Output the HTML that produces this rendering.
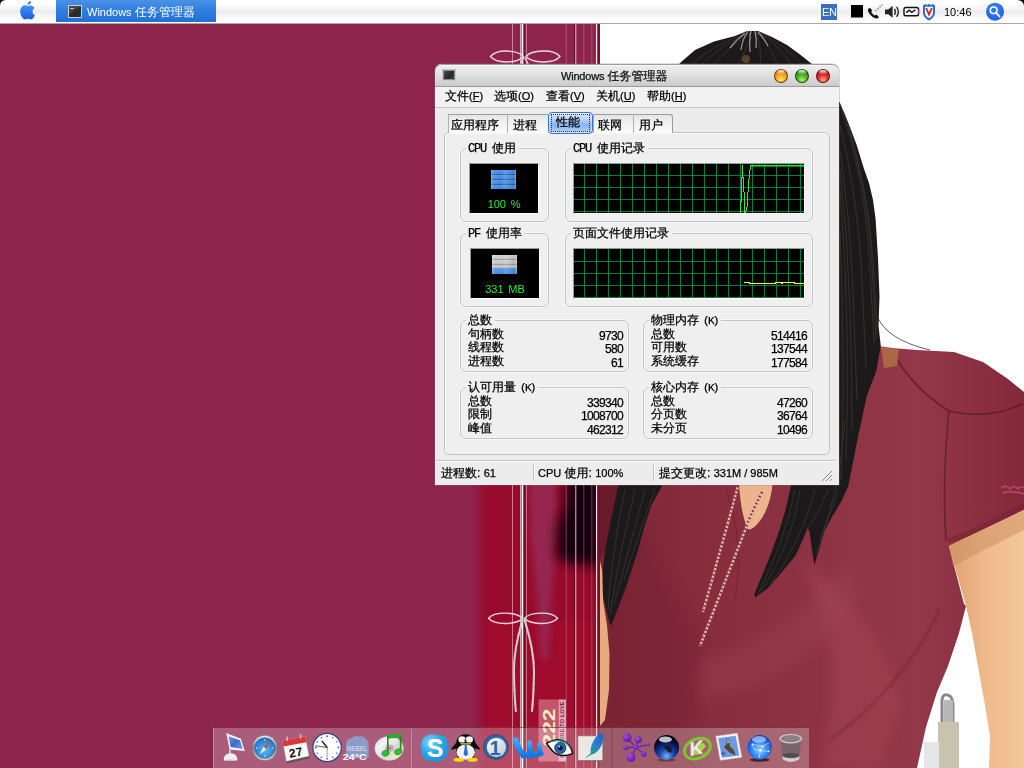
<!DOCTYPE html>
<html lang="zh-CN">
<head>
<meta charset="utf-8">
<title>Windows 任务管理器</title>
<style>
html,body{margin:0;padding:0;}
body{width:1024px;height:768px;overflow:hidden;position:relative;background:#8d244c;font-family:"Liberation Sans","WenQuanYi Zen Hei","Noto Sans CJK SC",sans-serif;font-size:12px;color:#000;}
#bg{position:absolute;left:0;top:0;width:1024px;height:768px;}
#menubar{will-change:transform;position:absolute;left:0;top:0;width:1024px;height:23px;background:linear-gradient(#ffffff 0,#fdfdfd 20%,#ececec 50%,#f4f4f4 65%,#ffffff 90%);border-bottom:1px solid #a9a9a9;font-size:12px;line-height:12px;}
#menubar .mbsvg{position:absolute;left:0;top:0;}
#menubar .lat{font-family:"Liberation Sans",sans-serif;font-size:11px;}
#menubar .tk{position:absolute;left:87px;top:6px;color:#fff;white-space:nowrap;}
#menubar .en{position:absolute;left:822px;top:6px;color:#fff;font-family:"Liberation Sans",sans-serif;font-size:11px;letter-spacing:-.3px;}
#menubar .clk{position:absolute;left:944px;top:6px;color:#000;font-family:"Liberation Sans",sans-serif;font-size:11px;}
/*WINCSS*/
#win{will-change:transform;position:absolute;left:435px;top:64px;width:403.5px;height:421px;background:#ececec;border-radius:7px 7px 0 0;box-shadow:0 0 0 .6px rgba(120,120,120,.5);font-size:12px;line-height:12px;color:#000;-webkit-text-stroke:.25px #000;}
#win .lat{font-family:"Liberation Sans",sans-serif;font-size:11px;}
#win .n{font-family:"Liberation Sans",sans-serif;font-size:12px;letter-spacing:-.67px;}
#win .mt .n{font-size:11px;letter-spacing:-.1px;}
#win .m{font-family:"Liberation Mono",monospace;letter-spacing:-1.2px;}
#win .k{letter-spacing:-1.7px;margin-left:4px;font-size:11px;}
.tbar{position:absolute;left:0;top:0;width:100%;height:22px;border-radius:7px 7px 0 0;background:linear-gradient(#efefef 0,#e6e6e6 35%,#d8d8d8 70%,#cbcbcb 100%);border-bottom:1px solid #9a9a9a;box-sizing:content-box;box-shadow:inset 0 1px 0 #9c9c9c, inset 0 2px 0 #f8f8f8;}
.ticon{position:absolute;left:7px;top:5px;width:12px;height:10px;border:1px solid #c8c8c8;outline:1px solid #8a8a8a;outline-offset:-2px;background:linear-gradient(135deg,#555 0,#2a2a2a 50%,#3c3c3c 100%);}
.ttext{position:absolute;left:126px;top:6px;white-space:nowrap;color:#1a1a1a;}
.ttext .lat{letter-spacing:-.2px;}
.tb{position:absolute;top:5px;width:14px;height:14px;border-radius:50%;box-sizing:border-box;border:1px solid rgba(60,30,0,.75);}
.tb.o{left:339px;background:radial-gradient(circle at 50% 85%,#ffe860 0,#f8a81c 45%,#e07808 80%);}
.tb.g{left:360px;background:radial-gradient(circle at 50% 85%,#b8f070 0,#4cb020 45%,#2a8410 80%);border-color:rgba(10,50,0,.75);}
.tb.r{left:381px;background:radial-gradient(circle at 50% 85%,#ffa090 0,#e03030 45%,#b01818 80%);border-color:rgba(70,0,0,.75);}
.tb:after{content:"";position:absolute;left:2px;top:0px;width:8px;height:4px;border-radius:50%;background:linear-gradient(rgba(255,255,255,.9),rgba(255,255,255,.1));}
.mbar{position:absolute;left:0;top:23px;width:100%;height:20px;background:#f2f2f2;border-bottom:1px solid #c6c6c6;}
.mbar>span{position:absolute;top:3px;white-space:nowrap;}
.mbar u{font-family:"Liberation Sans",sans-serif;font-size:11px;}
.panel{position:absolute;left:9px;top:68px;width:386px;height:323px;box-sizing:border-box;border:1px solid #c2c2c2;border-radius:5px;background:#efefef;box-shadow:inset 1px 1px 0 #fafafa;}
.tab{position:absolute;top:50px;height:19px;box-sizing:border-box;border:1px solid #9c9c9c;border-bottom:none;border-left-color:#b0b0b0;background:linear-gradient(#e6e6e6 0,#f2f2f2 50%,#fcfcfc 100%);text-align:left;padding:4px 0 0 3px;white-space:nowrap;}
.tab{border-right:none;}
.tab.last{border-right:1px solid #9c9c9c;border-radius:0 3px 0 0;}
.tab:first-of-type{border-radius:3px 0 0 0;}
.tab.sel{top:48px;height:22px;border:1px solid #346edb;border-radius:4px;background:linear-gradient(#dfeafc 0,#b3cef6 35%,#8ab4ef 60%,#a4c6f5 85%,#c4dafa 100%);padding:0;box-shadow:inset 0 0 0 1px rgba(255,255,255,.5);}
.tab.sel i{font-style:normal;display:block;margin:1px 2px 0 2px;height:16px;border:1px dotted #333;line-height:15px;padding-left:4px;}
.grp{position:absolute;box-sizing:border-box;border:1px solid #c4c4c4;border-radius:6px;box-shadow:0 0 0 1px rgba(255,255,255,.55), inset 0 0 0 1px rgba(255,255,255,.35);}
.grp b{position:absolute;left:5px;top:-7px;padding:0 3px 0 2px;background:#efefef;font-weight:normal;white-space:nowrap;line-height:12px;}
.meter{position:absolute;width:70px;height:51px;box-sizing:border-box;border:1px solid #9a9a9a;border-right-color:#fff;border-bottom-color:#fff;background:#000;}
.bars{position:absolute;left:21px;top:6px;width:25px;height:19px;}
.bars.blue{background:linear-gradient(90deg,rgba(255,255,255,.28) 0,rgba(255,255,255,.05) 12%,rgba(255,255,255,0) 40%,rgba(255,255,255,.12) 55%,rgba(0,0,40,.08) 90%,rgba(255,255,255,.2) 100%),repeating-linear-gradient(#4f96e6 0,#4389df 3.500px,#2b5fae 4px,#2b5fae 5px);}
.bars.grey{background:linear-gradient(90deg,rgba(255,255,255,.28) 0,rgba(255,255,255,.05) 12%,rgba(255,255,255,0) 40%,rgba(255,255,255,.12) 55%,rgba(0,0,0,.08) 90%,rgba(255,255,255,.2) 100%),linear-gradient(#d6d6d6 0,#c2c2c2 4px,#9a9a9a 4px,#9a9a9a 5px,#d0d0d0 5px,#bebebe 9px,#969696 9px,#969696 10px,#cacaca 10px,#bababa 13px,#7a9cd0 13px,#4f96e6 14px,#4f96e6 15px,#4389df 19px);}
.mt{-webkit-text-stroke:0;position:absolute;left:0;top:34px;width:68px;text-align:center;color:#22f028;white-space:pre;word-spacing:2px;}
.graph{position:absolute;width:232px;height:51px;box-sizing:border-box;border:1px solid #9a9a9a;border-right-color:#fff;border-bottom-color:#fff;background:#000;}
.graph svg{display:block;}
.rows{position:absolute;}
.rows p{margin:0;height:13px;line-height:13px;white-space:nowrap;position:relative;}
.rows p:nth-child(2){height:14px;}
.rows p span{position:absolute;right:0;top:2px;}
.sbar{position:absolute;left:0;top:396px;width:400px;height:25px;border-top:1px solid #c4c4c4;box-shadow:inset 0 1px 0 #fafafa;}
.sbar>span{position:absolute;top:6px;white-space:nowrap;}
.sbar>i{position:absolute;top:4px;width:1px;height:16px;background:#c0c0c0;border-right:1px solid #fafafa;}
.sbar .grip{position:absolute;left:386px;top:9px;}
/*ENDWINCSS*/
#dock{position:absolute;left:213px;top:727px;width:596px;height:41px;background:rgba(255,255,255,.26);box-sizing:border-box;border-top:1px solid rgba(90,10,40,.55);border-left:1px solid rgba(255,255,255,.25);}
#dock svg{position:absolute;left:0;top:0;}
</style>
</head>
<body>
<svg id="bg" viewBox="0 0 1024 768" width="1024" height="768">
<!--BGSTART-->
<defs>
<linearGradient id="ghostfade" x1="0" x2="1" y1="0" y2="0">
<stop offset="0" stop-color="#980a2c" stop-opacity="0"/>
<stop offset="1" stop-color="#980a2c" stop-opacity="1"/>
</linearGradient>
<linearGradient id="shirtg" x1="0" x2="1" y1="0" y2="0">
<stop offset="0" stop-color="#7e2636"/>
<stop offset="0.35" stop-color="#8a2f40"/>
<stop offset="0.75" stop-color="#933848"/>
<stop offset="1" stop-color="#84293a"/>
</linearGradient>
<linearGradient id="arm" x1="0" x2="1" y1="0" y2="0">
<stop offset="0" stop-color="#e0a070"/>
<stop offset="0.5" stop-color="#f0bb8c"/>
<stop offset="1" stop-color="#f4c69a"/>
</linearGradient>
<filter id="blur6" x="-30%" y="-30%" width="160%" height="160%"><feGaussianBlur stdDeviation="6"/></filter>
<filter id="blur3" x="-30%" y="-30%" width="160%" height="160%"><feGaussianBlur stdDeviation="3"/></filter>
<filter id="blur1" x="-30%" y="-30%" width="160%" height="160%"><feGaussianBlur stdDeviation="1"/></filter>
</defs>
<rect x="0" y="0" width="1024" height="768" fill="#8d244c"/>
<!-- ghost silhouette -->
<g>
<rect x="471" y="470" width="17" height="300" fill="url(#ghostfade)"/>
<rect x="488" y="470" width="112" height="300" fill="#980a2c"/>
<rect x="488" y="620" width="112" height="150" fill="#a40c2c" opacity=".5"/>
<path d="M528 470 L556 470 L556 540 L551 610 L548 660 L541 660 L538 610 L531 540 Z" fill="#96264f" filter="url(#blur3)"/>
<path d="M566 470 L600 470 L600 572 L586 563 L570 565 L556 556 L558 525 L565 505 Z" fill="#16000a" filter="url(#blur6)"/>
</g>
<!-- vertical lines -->
<g>
<rect x="512" y="23" width="1" height="745" fill="#f0c4d2" opacity=".6"/>
<rect x="520" y="23" width="1" height="745" fill="#f3d0da" opacity=".75"/>
<rect x="521.6" y="23" width="1.6" height="745" fill="#ffffff"/>
<rect x="524" y="23" width="1" height="745" fill="#4a0a20" opacity=".55"/>
<rect x="526" y="23" width="1" height="745" fill="#e8a8bc" opacity=".6"/>
<rect x="565.5" y="23" width="1.6" height="745" fill="#c87890" opacity=".35"/>
<rect x="574" y="23" width="1" height="745" fill="#3a0818" opacity=".6"/>
<rect x="575.3" y="23" width="1" height="745" fill="#f6dce4" opacity=".85"/>
<rect x="583.3" y="23" width="1" height="745" fill="#d890a8" opacity=".4"/>
<rect x="591.3" y="23" width="1" height="745" fill="#d890a8" opacity=".4"/>
<rect x="596" y="23" width="1.3" height="745" fill="#ffffff" opacity=".92"/>
<rect x="597.6" y="23" width="2.4" height="745" fill="#7c0c28"/>
</g>
<!-- bows -->
<g fill="none" stroke="#f2d4de" stroke-width="1.4">
<path d="M523.5 56.5C518 50 497 48.500 490.500 56.500C497 64.500 518 63 523.500 56.500Z"/>
<path d="M526 56.500C531.500 50 553.500 48.500 560 56.500C553.500 64.500 531.500 63 526 56.500Z"/>
<path d="M522.500 618.300C517 612 495 610.800 488.500 618.300C495 625.800 517 624.600 522.500 618.300Z"/>
<path d="M524.500 618.300C530 612 551 610.800 557.600 618.300C551 625.800 530 624.600 524.500 618.300Z"/>
</g>
<g fill="none" stroke-width="2" stroke-linecap="round">
<path d="M522.600 620Q513.500 650 514 672Q514.300 695 515.800 711" stroke="#ecc4dc"/>
<path d="M524.600 620Q534 650 534 672Q533.600 695 532 711" stroke="#ecc4dc"/>
<path d="M522.600 620Q513.500 650 514 672Q514.300 695 515.800 711" stroke="#a8d8b0" stroke-dasharray="2 5" opacity=".8"/>
<path d="M524.600 620Q534 650 534 672Q533.600 695 532 711" stroke="#a8d8b0" stroke-dasharray="2 5" opacity=".8"/>
<path d="M523.500 58Q521 62 520 66M525 58Q527.500 62 528.500 66" stroke="#e4c0e0" stroke-width="1.6"/>
</g>
<!-- 222 box -->
<rect x="538.500" y="699.500" width="20" height="62" fill="#c4566c"/>
<rect x="558.500" y="699.500" width="7.500" height="62" fill="#dba6b6"/>
<text transform="translate(555.300 746.500) rotate(-90)" font-family="Liberation Sans, sans-serif" font-weight="bold" font-size="16.500" fill="#f8ecc0" textLength="38" lengthAdjust="spacingAndGlyphs">222</text>
<text transform="translate(564.400 758) rotate(-90)" font-family="Liberation Sans, sans-serif" font-weight="bold" font-size="5.500" fill="#8a1c38" letter-spacing=".2">SOMEONE TO LOVE</text>
<!-- photo white -->
<rect x="600" y="23" width="424" height="745" fill="#ffffff"/>
<!-- woman: shirt -->
<path d="M600 430 L840 430 L878 346 L892 348 L917 350 L954 352 L983 362 L1008 379 L1024 392 L1024 510 L949 546 L964 604 L966 606 L959 633 L948 666 L937 692 L926 727 L917 768 L600 768 Z" fill="url(#shirtg)"/>
<!-- shirt shading -->
<path d="M600 560 L640 520 L700 640 L690 768 L600 768 Z" fill="#6e1e2e" opacity=".3" filter="url(#blur6)"/>
<path d="M800 560 Q870 600 900 700 L880 768 L820 768 Q850 650 800 560Z" fill="#a84c5c" opacity=".4" filter="url(#blur6)"/>
<path d="M700 660 Q780 640 850 560 L860 600 Q790 690 700 700Z" fill="#a04656" opacity=".3" filter="url(#blur6)"/>
<path d="M940 610 Q900 690 830 740" stroke="#6c1c2c" stroke-width="3" fill="none" opacity=".35" filter="url(#blur1)"/>
<path d="M949 411 Q942 480 946 540" stroke="#5a1826" stroke-width="1.600" fill="none" opacity=".7"/>
<path d="M895 356 Q915 390 949 411 Q990 420 1022 404" stroke="#4a1420" stroke-width="1.600" fill="none" opacity=".6"/>
<path d="M948 541 Q985 528 1024 505" stroke="#74202f" stroke-width="5" fill="none" opacity=".5"/>
<path d="M726 490 Q745 540 735 600" stroke="#6a1c2c" stroke-width="1.500" fill="none" opacity=".45"/>
<path d="M1001 488 Q1006 484 1010 489 Q1014 484 1018 489 Q1021 485 1024 488 M1002 493 Q1012 490 1024 494" stroke="#c24a72" stroke-width="1.600" fill="none" opacity=".9"/>
<path d="M600 486 L618 486 L611 520 L604 552 L600 560 Z" fill="#641828" opacity=".8"/>
<!-- arm -->
<path d="M949 546 L1024 510 L1024 768 L989 768 L990 736 L985 705 L979 672 L972 633 L966 606 Z" fill="url(#arm)"/>
<path d="M949 546 L1024 510 L1024 530 L953 566 Z" fill="#c88858" opacity=".45"/>
<!-- left skin sliver -->
<path d="M600 561 L602.500 572 L603 600 L607 625 L609.500 654 L609 690 L605 720 L600 726 Z" fill="#e6ac80"/>
<!-- neck opening -->
<path d="M739 484 L772.500 484 Q771 503 762 518 Q754 530 748 529.500 Q741 515 739 484 Z" fill="#ecb48c"/>
<!-- shoulder skin hint -->
<path d="M881 347 L899 349.500 L897 366 L884 368 Z" fill="#b07048" opacity=".85"/>
<!-- necklace cords -->
<g fill="none" stroke-linecap="butt">
<path d="M738 486 Q722 545 703 612" stroke="#dcb8ac" stroke-width="2.400"/>
<path d="M738 486 Q722 545 703 612" stroke="#7c2434" stroke-width="2.400" stroke-dasharray="1.500 2.500"/>
<path d="M762 492 Q748 520 746 528 Q722 590 700 646" stroke="#dcb8ac" stroke-width="2.400"/>
<path d="M762 492 Q748 520 746 528 Q722 590 700 646" stroke="#7c2434" stroke-width="2.400" stroke-dasharray="1.500 2.500"/>
</g>
<!-- hair -->
<path d="M640 200 L672 75 L680 63 L695 50 L714 41.500 L735 36 L747 31 L758 31 L772 37 L787 45 L800 54.500 L812 64 L830 88 L840 103 L848 122 L857 146 L864 169 L869 183 L873 200 L875.600 219 L878 258 L879.500 297 L878.500 326 L880.800 346 L876 372 L867 395 L858 437 L848.300 486 L841.600 501 L831.400 518 L824.600 531 L819.600 548 L814.500 565 L812 550 L809.400 531 L807.700 528 L796 555 L782 572 L767 589 L755 597.400 L754.400 594 L762 575.400 L770.500 555 L779 531.400 L785.700 509.400 L791 486 L791 300 Z" fill="#1b1919"/>
<path d="M625 300 L666 300 L662 486 L651 506 L644 528 L638 550 L631 572 L625 590 L618 608 L611 626 L609 621 L603 595 L602.600 572 L605 550 L611.500 517 L618 486 Z" fill="#1b1919"/>
<path d="M878 318 Q888 340 930 350" stroke="#2a2626" stroke-width=".9" fill="none" opacity=".8"/>
<!-- hair strands -->
<g fill="none" stroke="#5a5250" stroke-width=".9" opacity=".45">
<path d="M750 33 Q715 42 690 66"/><path d="M752 33 Q730 45 712 66"/><path d="M754 33 Q745 48 738 66"/><path d="M757 33 Q770 45 778 66"/><path d="M759 33 Q785 44 803 66"/><path d="M756 32 Q762 48 760 66"/><path d="M748 34 Q722 44 700 66"/><path d="M760 34 Q778 44 792 66"/>
<path d="M841 108 Q862 170 868 240 Q872 300 874 345"/><path d="M840 125 Q856 190 861 260 Q864 320 866 370"/><path d="M840 150 Q850 220 853 290 Q855 350 857 400"/><path d="M840 190 Q846 260 847 330 Q848 400 846 460"/><path d="M848 125 Q868 190 873 260 Q876 300 877 335"/><path d="M844 112 Q866 180 871 250 Q874 300 876 340"/><path d="M840 170 Q848 240 850 310 Q852 370 852 430"/><path d="M840 230 Q843 300 843 370 Q843 430 841 480"/>
<path d="M845 420 Q840 490 820 540"/><path d="M838 490 Q826 525 816 555"/><path d="M800 490 Q792 545 762 590"/><path d="M815 490 Q800 545 770 585"/><path d="M828 490 Q815 520 806 530"/><path d="M795 490 Q785 540 758 594"/>
<path d="M625 490 Q612 550 608 610"/><path d="M635 490 Q620 550 610 615"/><path d="M645 490 Q630 545 614 605"/><path d="M655 490 Q640 530 624 580"/>
</g>
<g fill="none" stroke="#e0e0e0" stroke-width="1.300" opacity=".6">
<path d="M748 31 Q742 40 741 50"/><path d="M751 30 Q749 40 750 52"/><path d="M755 31 Q757 40 756 48"/><path d="M745 33 Q736 40 730 48"/><path d="M758 32 Q764 38 768 46"/>
</g>
<ellipse cx="746" cy="59" rx="4" ry="4" fill="#7a5030" opacity=".7"/>
<!-- chair -->
<g>
<path d="M942 768 L942 700 Q943 692 950 696 Q953 699 953 706 L953 768" fill="none" stroke="#8a8a8a" stroke-width="3"/>
<rect x="944" y="700" width="9" height="68" fill="#b8b8b8"/>
<rect x="938" y="722" width="21" height="46" fill="#c9c2ae"/>
<rect x="924" y="742" width="15" height="26" fill="#e6e6e6"/>
</g>
<!--BGEND-->
</svg>
<!--MB-->
<div id="menubar">
 <svg class="mbsvg" width="1024" height="24" viewBox="0 0 1024 24">
  <defs>
   <linearGradient id="appleg" x1="0" y1="0" x2="0" y2="1"><stop offset="0" stop-color="#3f92f4"/><stop offset="1" stop-color="#1c5ee0"/></linearGradient>
   <linearGradient id="btng" x1="0" y1="0" x2="0" y2="1"><stop offset="0" stop-color="#4a92e6"/><stop offset=".5" stop-color="#2f7ddf"/><stop offset="1" stop-color="#2270d6"/></linearGradient>
   <radialGradient id="spotg" cx=".45" cy=".35" r=".7"><stop offset="0" stop-color="#3f8cf6"/><stop offset="1" stop-color="#1a5ae0"/></radialGradient>
  </defs>
  <path d="M0 0H6Q0 0 0 6Z" fill="#000"/>
  <path d="M1024 0H1017Q1024 0 1024 7Z" fill="#000"/>
  <!-- apple -->
  <path d="M28 6.3C26.6 5.2 24.8 4.9 23.4 5.6C21 6.8 19.9 9.6 20.2 12.2C20.5 15 22 17.8 23.6 18.9C24.8 19.7 26 19.4 27 18.9C27.7 18.6 28.4 18.6 29.1 18.9C30.2 19.4 31.4 19.7 32.5 18.8C33.6 17.9 34.5 16.5 34.9 15.1C33.3 14.4 32.5 13.1 32.6 11.5C32.7 10 33.4 8.8 34.4 8C33.4 6.3 31.6 5.2 29.8 5.6C29.1 5.8 28.5 6.1 28 6.3Z" fill="url(#appleg)"/>
  <path d="M27.3 4.8C27.2 3.2 28.6 1.3 31 0.9C31.2 2.9 29.6 4.7 27.3 4.8Z" fill="#2f78ec"/>
  <!-- task button -->
  <rect x="56" y="0" width="160" height="22" fill="url(#btng)"/>
  <rect x="68" y="5" width="14" height="13" fill="#cfcfcf"/>
  <rect x="69" y="6" width="12" height="11" fill="#2b2b2b"/>
  <path d="M69 6H81L69 14Z" fill="#555" opacity=".7"/>
  <rect x="70.5" y="8" width="3" height="1" fill="#ddd"/>
  <!-- EN -->
  <rect x="821" y="4" width="16" height="16" fill="#3c6cbe"/>
  <!-- black square -->
  <rect x="851" y="5" width="12" height="12.5" fill="#000"/>
  <!-- phone -->
  <path d="M868.6 8.6C867.6 9.6 867.8 11.2 868.9 12.9C870.3 15 872.6 17.2 874.6 18.1C876.4 18.9 877.8 18.4 878.9 16.9L876.4 14.6L874.9 15.6C873.6 14.9 872 13.3 871.2 11.9L872.3 10.6L870.1 8Z" fill="#111"/>
  <g stroke="#9a9a9a" stroke-width="1.6" stroke-linecap="butt"><path d="M875.3 11.2L876.3 9.9M877.5 9.4L878.5 8.1M879.6 7.4L880.6 6.1M881.6 5.6L882.4 4.6"/></g>
  <!-- speaker -->
  <path d="M885 9.4H888.3L892.6 5.7V17.8L888.3 14.2H885Z" fill="#222"/>
  <path d="M894.4 8.8Q896.4 11.7 894.4 14.8M896.6 6.8Q900 11.7 896.6 16.8" stroke="#222" stroke-width="1.4" fill="none"/>
  <!-- battery -->
  <rect x="904" y="7.5" width="14.5" height="8.2" rx="1.8" fill="#fff" stroke="#111" stroke-width="1.4"/>
  <path d="M906.3 12.6L909.4 10.2L911.8 12.4L915.4 9.8" stroke="#111" stroke-width="1.4" fill="none"/>
  <path d="M918.8 9.5V14" stroke="#d040c0" stroke-width="1"/>
  <!-- shield -->
  <path d="M923 5.4L925.2 3.9L927 5L929 3.8L931 5L932.8 3.9L935 5.4V12.4C935 16.2 932.2 18.9 929 20.4C925.8 18.9 923 16.2 923 12.4Z" fill="#2f6fd0"/>
  <path d="M925 6.8H933V12.4C933 14.9 931.3 16.9 929 18.1C926.7 16.9 925 14.9 925 12.4Z" fill="#fff"/>
  <path d="M926.2 8L929 14.6L931.8 8" stroke="#d82828" stroke-width="1.9" fill="none"/>
  <!-- spotlight -->
  <circle cx="995" cy="11.7" r="9" fill="url(#spotg)"/>
  <circle cx="993.6" cy="10.3" r="3.3" fill="#2f74ec" stroke="#fff" stroke-width="1.6"/>
  <path d="M996.2 12.9L999.6 16.6" stroke="#fff" stroke-width="1.9" stroke-linecap="round"/>
 </svg>
 <span class="tk"><span class="lat">Windows</span> 任务管理器</span>
 <span class="en">EN</span>
 <span class="clk">10:46</span>
</div>
<!--ENDMB-->
<!--WIN-->
<div id="win">
 <div class="tbar">
  <div class="ticon"></div>
  <div class="ttext"><span class="lat">Windows</span> 任务管理器</div>
  <div class="tb o"></div><div class="tb g"></div><div class="tb r"></div>
 </div>
 <div class="mbar">
  <span style="left:10px">文件<span class="lat">(<u>F</u>)</span></span>
  <span style="left:59px">选项<span class="lat">(<u>O</u>)</span></span>
  <span style="left:111px">查看<span class="lat">(<u>V</u>)</span></span>
  <span style="left:161px">关机<span class="lat">(<u>U</u>)</span></span>
  <span style="left:212px">帮助<span class="lat">(<u>H</u>)</span></span>
 </div>
 <div class="panel"></div>
 <div class="tab" style="left:13px;width:59px;padding-left:2px">应用程序</div>
 <div class="tab" style="left:72px;width:41px;padding-left:5px">进程</div>
 <div class="tab" style="left:158px;width:40px;padding-left:4px">联网</div>
 <div class="tab last" style="left:198px;width:40px;padding-left:5px">用户</div>
 <div class="tab sel" style="left:113px;width:45px"><i>性能</i></div>

 <div class="grp" style="left:25px;top:84px;width:89px;height:74px"><b><span class="m">CPU </span>使用</b></div>
 <div class="grp" style="left:130px;top:84px;width:248px;height:74px"><b><span class="m">CPU </span>使用记录</b></div>
 <div class="grp" style="left:25px;top:169px;width:89px;height:74px"><b><span class="m">PF </span>使用率</b></div>
 <div class="grp" style="left:130px;top:169px;width:248px;height:74px"><b>页面文件使用记录</b></div>

 <div class="meter" style="left:34px;top:99px">
   <div class="bars blue"></div>
   <div class="mt"><span class="n">100 %</span></div>
 </div>
 <div class="meter" style="left:35px;top:184px">
   <div class="bars grey"></div>
   <div class="mt"><span class="n">331 MB</span></div>
 </div>
 <div class="graph" style="left:138px;top:99px">
  <svg width="230" height="49" viewBox="0 0 230 49">
   <rect width="231" height="50" fill="#000"/>
   <g stroke="#008040" stroke-width="1" shape-rendering="crispEdges">
    <path d="M10.5 0V50M22.5 0V50M34.5 0V50M46.5 0V50M58.5 0V50M70.5 0V50M82.5 0V50M94.5 0V50M106.5 0V50M118.5 0V50M130.5 0V50M142.5 0V50M154.5 0V50M166.5 0V50M178.5 0V50M190.5 0V50M202.5 0V50M214.5 0V50M226.5 0V50"/>
    <path d="M0 11.5H231M0 23.5H231M0 35.5H231M0 47.5H231"/>
   </g>
   <path d="M168.4 1V13L167.4 14V37L166.5 38V49" stroke="#3fe43f" stroke-width="1" fill="none" shape-rendering="crispEdges"/>
   <path d="M169.4 13L170.9 48.5L171.8 48L173.4 41L174.2 24.600L175.5 9L176.7 1.600" stroke="#3fe43f" stroke-width="1" fill="none" shape-rendering="crispEdges"/><path d="M176.2 1.700H230" stroke="#00ff00" stroke-width="1.400" fill="none"/>
  </svg>
 </div>
 <div class="graph" style="left:138px;top:184px">
  <svg width="230" height="49" viewBox="0 0 230 49">
   <rect width="231" height="50" fill="#000"/>
   <g stroke="#008040" stroke-width="1" shape-rendering="crispEdges">
    <path d="M10.5 0V50M22.5 0V50M34.5 0V50M46.5 0V50M58.5 0V50M70.5 0V50M82.5 0V50M94.5 0V50M106.5 0V50M118.5 0V50M130.5 0V50M142.5 0V50M154.5 0V50M166.5 0V50M178.5 0V50M190.5 0V50M202.5 0V50M214.5 0V50M226.5 0V50"/>
    <path d="M0 12.5H231M0 24.5H231M0 36.5H231M0 48.5H231"/>
   </g>
   <path d="M170 33.5H175L176 34.5H201L202 33.5H207L208 34.5L209 33.5H220L221 34.5H231" stroke="#ffff00" stroke-width="1" fill="none" shape-rendering="crispEdges"/>
  </svg>
 </div>

 <div class="grp" style="left:25px;top:256px;width:169px;height:52px"><b>总数</b></div>
 <div class="grp" style="left:208px;top:256px;width:170px;height:52px"><b>物理内存<span class="m k">(K)</span></b></div>
 <div class="grp" style="left:25px;top:323px;width:169px;height:52px"><b>认可用量<span class="m k">(K)</span></b></div>
 <div class="grp" style="left:208px;top:323px;width:170px;height:52px"><b>核心内存<span class="m k">(K)</span></b></div>

 <div class="rows" style="left:33px;top:264px;width:155px"><p>句柄数<span class="n">9730</span></p><p>线程数<span class="n">580</span></p><p>进程数<span class="n">61</span></p></div>
 <div class="rows" style="left:216px;top:264px;width:156px"><p>总数<span class="n">514416</span></p><p>可用数<span class="n">137544</span></p><p>系统缓存<span class="n">177584</span></p></div>
 <div class="rows" style="left:33px;top:331px;width:155px"><p>总数<span class="n">339340</span></p><p>限制<span class="n">1008700</span></p><p>峰值<span class="n">462312</span></p></div>
 <div class="rows" style="left:216px;top:331px;width:156px"><p>总数<span class="n">47260</span></p><p>分页数<span class="n">36764</span></p><p>未分页<span class="n">10496</span></p></div>

 <div class="sbar">
  <span style="left:6px">进程数: <span class="lat">61</span></span>
  <i style="left:98px"></i>
  <span style="left:103px"><span class="lat">CPU</span> 使用: <span class="lat">100%</span></span>
  <i style="left:218px"></i>
  <span style="left:224px">提交更改: <span class="lat">331M / 985M</span></span>
  <svg class="grip" width="12" height="12" viewBox="0 0 12 12"><path d="M11 1L1 11M11 5L5 11M11 9L9 11" stroke="#8c8c8c" stroke-width="1"/></svg>
 </div>
</div>
<!--ENDWIN-->
<!--DOCK-->
<div id="dock">
<svg width="596" height="40" viewBox="0 0 596 40">
<defs>
 <linearGradient id="dkscr" x1="0" y1="0" x2="1" y2="1"><stop offset="0" stop-color="#6a9ae6"/><stop offset=".5" stop-color="#3a6cc8"/><stop offset="1" stop-color="#6f9fe8"/></linearGradient>
 <radialGradient id="dksaf" cx=".5" cy=".6" r=".6"><stop offset="0" stop-color="#5cc0f4"/><stop offset="1" stop-color="#1a6cd0"/></radialGradient>
 <linearGradient id="dkring" x1="0" y1="0" x2="0" y2="1"><stop offset="0" stop-color="#f4f4f4"/><stop offset=".5" stop-color="#8a8a8a"/><stop offset="1" stop-color="#d8d8d8"/></linearGradient>
 <linearGradient id="dkcd" x1="0" y1="0" x2="1" y2="1"><stop offset="0" stop-color="#c8d8f0"/><stop offset=".3" stop-color="#f4f4f4"/><stop offset=".6" stop-color="#d8d8d8"/><stop offset=".8" stop-color="#e8f0c0"/><stop offset="1" stop-color="#c0c0d0"/></linearGradient>
 <radialGradient id="dksky" cx=".35" cy=".3" r=".8"><stop offset="0" stop-color="#8ad8fa"/><stop offset=".5" stop-color="#2aa6e8"/><stop offset="1" stop-color="#1690d8"/></radialGradient>
 <radialGradient id="dkgl1" cx=".5" cy=".85" r=".8"><stop offset="0" stop-color="#7ab0f8"/><stop offset=".35" stop-color="#1a48b0"/><stop offset=".75" stop-color="#06103c"/><stop offset="1" stop-color="#02040c"/></radialGradient>
 <radialGradient id="dkgl2" cx=".5" cy=".6" r=".6"><stop offset="0" stop-color="#8cd0ff"/><stop offset=".6" stop-color="#2a80f0"/><stop offset="1" stop-color="#1038b8"/></radialGradient>
 <linearGradient id="dkfea" x1="1" y1="0" x2="0" y2="1"><stop offset="0" stop-color="#2a58d8"/><stop offset=".5" stop-color="#2a86c8"/><stop offset="1" stop-color="#30a848"/></linearGradient>
 <linearGradient id="dkw" x1="0" y1="0" x2="0" y2="1"><stop offset="0" stop-color="#38a8ff"/><stop offset="1" stop-color="#1478e0"/></linearGradient>
 <radialGradient id="dkpur" cx=".35" cy=".3" r=".8"><stop offset="0" stop-color="#a050e0"/><stop offset="1" stop-color="#5a10a0"/></radialGradient>
 <linearGradient id="dkone" x1="0" y1="0" x2="1" y2="1"><stop offset="0" stop-color="#ffffff"/><stop offset="1" stop-color="#c0c4cc"/></linearGradient>
</defs>
<!-- 1 iMac -->
<path d="M12.2 5L26.9 10.7L30.8 22.9L15.6 21.4Z" fill="#f6f2f4"/>
<path d="M14.6 8.3L25.9 12.2L28.8 21L16.6 19Z" fill="url(#dkscr)"/>
<path d="M16.2 21.5L17.2 26H15.6L15 21.4Z" fill="#e8e4e6"/>
<path d="M9.6 32.2Q9.8 25.4 16.6 25.3Q23.2 25.4 23.5 32.2Q16.5 33.6 9.6 32.2Z" fill="#f0eeee"/>
<path d="M9.6 32.2Q16.5 33.6 23.5 32.2Q16.5 31 9.6 32.2Z" fill="#c8c0c4"/>
<!-- 2 Safari -->
<circle cx="50.8" cy="20" r="12.7" fill="url(#dkring)" stroke="#6a6a6a" stroke-width=".6"/>
<circle cx="50.8" cy="20" r="10.3" fill="url(#dksaf)" stroke="#4a5a78" stroke-width=".6"/>
<path d="M56 13.6L52 21.2L49.6 18.8Z" fill="#e84820"/>
<path d="M45.6 26.4L49.6 18.8L52 21.2Z" fill="#f4f4f4"/>
<path d="M50.8 11V13M50.8 27V29M41.8 20H43.8M57.8 20H59.8" stroke="#e8f4ff" stroke-width=".8"/>
<!-- 3 Calendar -->
<path d="M68.4 12.6L91.3 8.3L95.2 28.3L72.3 33.6Z" fill="#fbfbfb" stroke="#8a8a8a" stroke-width=".5"/>
<path d="M68.4 12.6L91.3 8.3L92.5 14.2L69.5 18.6Z" fill="#d83a3a"/>
<path d="M72.3 33.6L95.2 28.3L95.6 30.2L72.8 35.4Z" fill="#5a5a5a"/>
<path d="M73.2 8.6V13M86.6 6V10.4" stroke="#c8c8c8" stroke-width="1.4"/>
<text x="81.6" y="28.6" font-family="Liberation Sans, sans-serif" font-weight="bold" font-size="12" text-anchor="middle" fill="#111" transform="rotate(-10 81.6 24)">27</text>
<!-- 4 Clock -->
<circle cx="113.1" cy="19.5" r="14.2" fill="#fdfdff" stroke="#34408c" stroke-width="1.2"/>
<g fill="#3a5ad0"><circle cx="113.1" cy="8.2" r=".9"/><circle cx="118.8" cy="9.7" r=".8"/><circle cx="122.9" cy="13.8" r=".8"/><circle cx="124.4" cy="19.5" r=".9"/><circle cx="122.9" cy="25.2" r=".8"/><circle cx="118.8" cy="29.3" r=".8"/><circle cx="113.1" cy="30.8" r=".9"/><circle cx="107.4" cy="29.3" r=".8"/><circle cx="103.3" cy="25.2" r=".8"/><circle cx="101.8" cy="19.5" r=".9"/><circle cx="103.3" cy="13.8" r=".8"/><circle cx="107.4" cy="9.7" r=".8"/></g>
<path d="M113.1 19.5L108.2 13.4" stroke="#222" stroke-width="1.5" stroke-linecap="round"/>
<path d="M113.1 19.5L101.6 17.8" stroke="#666" stroke-width="1" stroke-linecap="round"/>
<path d="M113.1 19.5V29.6" stroke="#b06040" stroke-width=".7"/>
<!-- 5 Weather -->
<path d="M132 30V17Q132 11 137 10.5Q140 7 145 8.4Q150 7.6 152 11.4Q155 13 154.6 18V30Z" fill="#8aa2d0" opacity=".9"/>
<text x="143" y="22.6" font-family="Liberation Sans, sans-serif" font-style="italic" font-weight="bold" font-size="7.5" text-anchor="middle" fill="#c4d2ec" textLength="20" lengthAdjust="spacingAndGlyphs">NEBEL</text>
<text x="140.8" y="32.2" font-family="Liberation Sans, sans-serif" font-weight="bold" font-size="9" text-anchor="middle" fill="#fff" textLength="24" lengthAdjust="spacingAndGlyphs">24°C</text>
<!-- 6 iTunes -->
<ellipse cx="175.1" cy="20.4" rx="14.4" ry="12.2" fill="url(#dkcd)" stroke="#a8a8a8" stroke-width=".5"/>
<ellipse cx="175.6" cy="20.2" rx="4.4" ry="3.6" fill="#d8a8bc"/>
<ellipse cx="175.6" cy="20.2" rx="1.6" ry="1.3" fill="#b07890"/>
<path d="M173 6.4L187.4 5.2V9.6L173 10.8Z" fill="#2eac2e"/>
<path d="M173.8 8V25M186.6 7V23.6" stroke="#1f8a1f" stroke-width="1.6"/>
<ellipse cx="171.6" cy="25.2" rx="3.7" ry="2.9" fill="#30c030" stroke="#167016" stroke-width=".5" transform="rotate(-20 171.6 25.2)"/>
<ellipse cx="184.2" cy="23.8" rx="3.7" ry="2.9" fill="#30c030" stroke="#167016" stroke-width=".5" transform="rotate(-20 184.2 23.8)"/>
<!-- sep -->
<rect x="197" y="1" width="1" height="39" fill="#d8a8bc" opacity=".6"/>
<!-- 7 Skype -->
<path d="M209 10Q214 4.6 222 6.8Q231 5.6 233.4 13Q236.6 22 232.6 28Q227 35.4 219 33Q210 34 207.6 26Q205 17 209 10Z" fill="url(#dksky)"/>
<text x="221" y="28.6" font-family="Liberation Sans, sans-serif" font-weight="bold" font-size="25" text-anchor="middle" fill="#fff">S</text>
<!-- 8 Penguin -->
<path d="M251.6 6.2C246 6.2 242.6 10 242.4 14C240.6 17 238.4 19.4 236.8 21.4C239.6 21.6 241.4 20.8 242.4 20C241.6 25 243.4 30 246 31.4H257.4C260 30 261.8 25 261 20C262 20.8 263.8 21.6 266.6 21.4C265 19.4 262.8 17 261 14C260.8 10 257.2 6.2 251.6 6.2Z" fill="#0a0a0a"/>
<ellipse cx="251.7" cy="24.2" rx="9.2" ry="7.6" fill="#f2f2f2"/>
<ellipse cx="248" cy="11.4" rx="3.6" ry="3.2" fill="#f4f4f4"/><ellipse cx="255.4" cy="11.4" rx="3.6" ry="3.2" fill="#f4f4f4"/>
<circle cx="251.4" cy="12.4" r="1.1" fill="#333"/>
<path d="M246.4 15.2H257V16.4H246.4Z" fill="#e8c820"/>
<path d="M250.4 16.4H253L252.8 18.4L254 26.4L251.8 28.2L249.6 26.4L250.8 18.4Z" fill="#2a70e0"/>
<ellipse cx="244.8" cy="31.7" rx="5.2" ry="2" fill="#f8d808"/><ellipse cx="258.5" cy="31.7" rx="5.2" ry="2" fill="#f8d808"/>
<!-- 9 One -->
<circle cx="281.9" cy="19" r="12.4" fill="#2a66a8" stroke="#1a3c70" stroke-width=".6"/>
<circle cx="282.4" cy="19.4" r="9.6" fill="url(#dkone)"/>
<text x="281" y="26.800" font-family="Liberation Sans, sans-serif" font-weight="bold" font-size="20" text-anchor="middle" fill="#2a66a8">1</text>
<!-- 10 W -->
<g fill="none" stroke="url(#dkw)" stroke-linecap="round" stroke-linejoin="round">
<path d="M301.6 12.4Q305 22 309.4 27.6Q318 27.4 326.6 25.4" stroke-width="6"/>
<path d="M315.6 14.6L316.6 24.6" stroke-width="4.600"/>
<path d="M325.4 16.4L326.4 25" stroke-width="4.200"/>
</g>
<!-- 11 Eye -->
<path d="M332.4 15.4Q344 8.6 352 14.4Q357.4 18.6 358.6 25.6Q346 30.6 338.6 23Q335 18.6 332.4 15.4Z" fill="#fafafa" stroke="#0a0a0a" stroke-width="1.5" stroke-linejoin="round"/>
<path d="M335 14.2Q345 9.4 352.4 14.6Q356.4 18 357.6 22.4Q353 15.4 345 13.6Q339.6 13 335 14.2Z" fill="#38b088"/>
<circle cx="346.3" cy="20" r="5.6" fill="#2c62b4" stroke="#12305c" stroke-width=".8"/>
<circle cx="346.3" cy="20" r="2.4" fill="#10141c"/>
<circle cx="345.2" cy="18.6" r="1" fill="#c8d8f0"/>
<!-- 12 Feather -->
<rect x="364" y="8" width="24.6" height="24.4" fill="#e9e8e4" stroke="#a09898" stroke-width=".6"/>
<path d="M364 32.4H388.6V33.4H364Z" fill="#6a5a5e" opacity=".6"/>
<path d="M371 30.4Q374 27 376.6 25.4Q376 17 381.6 9.6Q385.6 4.6 388.4 5.2Q390.6 9 387.6 17Q384 25 377.8 26.6Q374 28.6 371 30.4Z" fill="url(#dkfea)"/>
<!-- sep -->
<rect x="397.4" y="1" width="1" height="39" fill="#5a3040" opacity=".45"/>
<!-- 13 Molecule -->
<g stroke="#6a22b8" stroke-width="1.3"><path d="M421.9 19.5L413.1 9.7M421.9 19.5L424.3 11.7M421.9 19.5L434.6 16.6M421.9 19.5L411.6 19.5M421.9 19.5L417 29.3M421.9 19.5L429.7 25.8"/></g>
<g fill="url(#dkpur)"><circle cx="413.1" cy="9.7" r="4.4"/><circle cx="424.3" cy="11.7" r="3.5"/><circle cx="434.6" cy="16.6" r="1.7"/><circle cx="411.6" cy="19.5" r="2.6"/><circle cx="417" cy="29.3" r="4.5"/><circle cx="429.7" cy="25.8" r="2.9"/><circle cx="421.9" cy="19.5" r="2"/></g>
<!-- 14 Dark globe -->
<ellipse cx="452.6" cy="32" rx="9" ry="1.6" fill="#3a1420" opacity=".5"/>
<circle cx="452.6" cy="19.5" r="12.5" fill="url(#dkgl1)"/>
<ellipse cx="451.4" cy="11.4" rx="6.4" ry="3" fill="#e8eef8" opacity=".8"/>
<path d="M450 18Q454 16.6 457 19.6Q459 22.6 456.4 25Q453.4 24 452.4 21.4Q450 20.4 450 18Z" fill="#1a1410" opacity=".85"/>
<!-- 15 Green K -->
<ellipse cx="483.4" cy="20.6" rx="13.6" ry="9.6" fill="none" stroke="#7cc82a" stroke-width="3" transform="rotate(-24 483.4 20.6)"/>
<path d="M476 26L488 14L492 18L484 27Z" fill="#a8e040" opacity=".9"/>
<text x="482" y="26.6" font-family="Liberation Sans, sans-serif" font-weight="bold" font-style="italic" font-size="19" text-anchor="middle" fill="#f0f0f0" stroke="#d0d0d0" stroke-width=".5" transform="rotate(-12 482 20)">K</text>
<!-- 16 Stamp -->
<path d="M501.9 8.3L523.3 5.3L527.7 29.3L506.3 32.2Z" fill="#f4f2f0" stroke="#e0d8d8" stroke-width="1" stroke-dasharray="1.2 1"/>
<path d="M504.2 10.2L521.6 7.8L525.3 27.4L508 29.8Z" fill="#6c9ae4"/>
<path d="M513 10.6Q515.4 10.6 515.4 14.6L516 18.6Q521 22.6 521.4 27Q516 25.6 512.6 21.4Q509.6 20.4 510.6 18.4Q512.4 17.6 512.6 14.6Q512.2 11.4 513 10.6Z" fill="#5a4428"/>
<path d="M513.4 11Q515 11.4 514.8 15L513.4 15.6Z" fill="#d8d8d0"/>
<circle cx="509.4" cy="25.6" r="2.2" fill="#3a60b0" opacity=".8"/>
<!-- 17 Blue globe -->
<ellipse cx="545.8" cy="31.8" rx="10" ry="2" fill="#1a0810" opacity=".7"/>
<circle cx="545.8" cy="19.3" r="12.2" fill="url(#dkgl2)"/>
<ellipse cx="545" cy="11.4" rx="7" ry="3.4" fill="#d8ecff" opacity=".55"/>
<g stroke="#e4f2ff" stroke-width=".6" opacity=".9" fill="none"><path d="M538.4 16.4L548.6 18.4L555.4 14.6M548.6 18.4L546.4 22.6L554.6 23.4M546.4 22.6L540 21.4M546.4 22.6L545.4 28.6M538.4 16.4L540 21.4"/></g>
<g fill="#fff"><circle cx="538.4" cy="16.4" r=".9"/><circle cx="548.6" cy="18.4" r="1"/><circle cx="546.4" cy="22.6" r="1.1"/><circle cx="554.6" cy="23.4" r=".8"/><circle cx="545.4" cy="28.6" r=".8"/></g>
<!-- 18 Trash -->
<path d="M566 10.8L568.6 31Q577 35 585.4 31L587.4 10.8Z" fill="#6c6468" opacity=".8"/>
<ellipse cx="576.7" cy="10.7" rx="10.7" ry="4.2" fill="#8c8084" stroke="#d4ccd0" stroke-width="1.2"/>
<path d="M568.4 28Q577 31 585.6 28L585.2 31.6Q577 36.4 568.8 31.6Z" fill="#d0cccc"/>
<ellipse cx="577" cy="27.6" rx="8.4" ry="2.6" fill="#4a4448" opacity=".8"/>
</svg>
</div>
<!--ENDDOCK-->
</body>
</html>
